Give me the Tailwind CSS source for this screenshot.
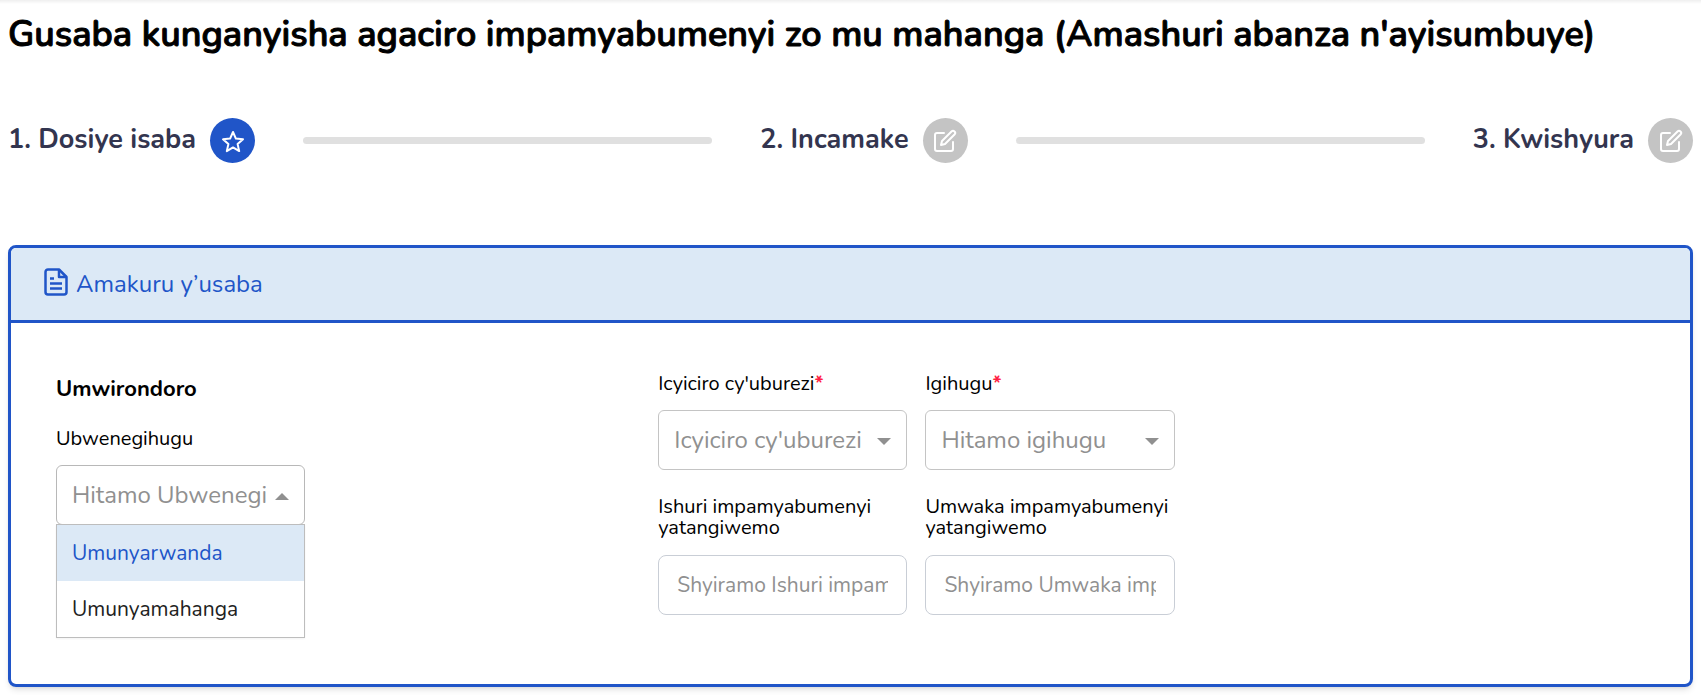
<!DOCTYPE html>
<html lang="rw">
<head>
  <meta charset="UTF-8" />
  <meta name="viewport" content="width=device-width, initial-scale=1.0"/>
  <title>Gusaba kunganyisha agaciro</title>
  <script src="https://cdn.jsdelivr.net/npm/@tailwindcss/browser@4"></script>
</head>
<body class="bg-white text-black font-[Nunito,Lato,sans-serif]">

  <div class="h-1 bg-linear-to-b from-[#efefef] to-white"></div>

  <main class="px-2 pt-2 pb-2">
    <h1 class="text-[36px] leading-[46px] font-semibold [-webkit-text-stroke:1px_black]">Gusaba kunganyisha agaciro impamyabumenyi zo mu mahanga (Amashuri abanza n'ayisumbuye)</h1>

    <!-- Steps -->
    <ol class="mt-[60px] flex items-center gap-12 text-[27px] font-bold text-[#33354f]">
      <li class="flex items-center gap-[14px]">
        <span>1. Dosiye isaba</span>
        <span class="flex size-[45px] items-center justify-center rounded-full bg-[#2055c8] text-white">
          <svg class="size-6" viewBox="0 0 24 24" fill="none" stroke="currentColor" stroke-width="2" stroke-linejoin="round"><path d="M12 3l2.900 6.600 7.100.700-5.400 4.800 1.600 7-6.200-3.700-6.200 3.700 1.600-7L2 10.300l7.100-.700z"/></svg>
        </span>
      </li>
      <li class="h-[7px] flex-1 rounded-full bg-[#e0e0e0]" aria-hidden="true"></li>
      <li class="flex items-center gap-[14px]">
        <span>2. Incamake</span>
        <span class="flex size-[45px] items-center justify-center rounded-full bg-[#c4c4c4] text-white">
          <svg class="size-6" viewBox="0 0 24 24" fill="none" stroke="currentColor" stroke-width="2" stroke-linecap="round" stroke-linejoin="round"><path d="M11 4H4a2 2 0 0 0-2 2v14a2 2 0 0 0 2 2h14a2 2 0 0 0 2-2v-7"/><path d="M18.500 2.500a2.100 2.100 0 0 1 3 3L12 15l-4 1 1-4z"/></svg>
        </span>
      </li>
      <li class="h-[7px] flex-1 rounded-full bg-[#e0e0e0]" aria-hidden="true"></li>
      <li class="flex items-center gap-[14px]">
        <span>3. Kwishyura</span>
        <span class="flex size-[45px] items-center justify-center rounded-full bg-[#c4c4c4] text-white">
          <svg class="size-6" viewBox="0 0 24 24" fill="none" stroke="currentColor" stroke-width="2" stroke-linecap="round" stroke-linejoin="round"><path d="M11 4H4a2 2 0 0 0-2 2v14a2 2 0 0 0 2 2h14a2 2 0 0 0 2-2v-7"/><path d="M18.500 2.500a2.100 2.100 0 0 1 3 3L12 15l-4 1 1-4z"/></svg>
        </span>
      </li>
    </ol>

    <!-- Form card -->
    <section class="mt-[82px] rounded-lg border-3 border-[#2055c8] shadow-md">
      <h2 class="flex h-[75px] items-center gap-2 rounded-t-[5px] border-b-3 border-[#2055c8] bg-[#dce9f6] px-[33px] text-2xl text-[#2055c8]">
        <svg class="mb-1 h-7 w-6" viewBox="0 0 24 28" fill="none" stroke="currentColor" stroke-width="2.500" stroke-linejoin="round"><path d="M15 1.500H4A2.500 2.500 0 0 0 1.500 4v20A2.500 2.500 0 0 0 4 26.500h16a2.500 2.500 0 0 0 2.500-2.500V9z"/><path d="M15 1.500V9h7.500"/><path d="M6 10.500h4M6 15.500h12M6 20.500h12"/></svg>
        Amakuru y’usaba
      </h2>

      <form class="flex px-[45px] pt-[50px] pb-[69px] text-[21px] leading-[21px]">
        <div class="w-[37.9%] pt-[5px]">
          <h3 class="text-[22px] leading-[22px] font-bold">Umwirondoro</h3>
          <label for="nationality" class="mt-7 block text-xl leading-[21px]">Ubwenegihugu</label>
          <div class="relative mt-4 w-[249px]">
            <select id="nationality" class="h-[60px] w-full appearance-none rounded-md border border-[#b8b8b8] pr-[38px] pl-[15px] text-2xl text-[#909090]">
              <option>Hitamo Ubwenegihugu</option>
            </select>
            <svg class="pointer-events-none absolute top-[28px] right-4 h-[7px] w-[14px] text-[#909090]" viewBox="0 0 14 7" fill="currentColor"><path d="M0 7l7-7 7 7z"/></svg>
            <ul role="listbox" aria-label="Ubwenegihugu" class="absolute top-full left-0 -mt-px w-full border border-[#bdbdbd] bg-white shadow-xs">
              <li role="option" aria-selected="true" class="flex h-14 items-center bg-[#dce9f6] px-[15px] text-[#2055c8]">Umunyarwanda</li>
              <li role="option" aria-selected="false" class="flex h-14 items-center px-[15px] text-[#212121]">Umunyamahanga</li>
            </ul>
          </div>
        </div>

        <div class="grid w-[32.5%] grid-cols-2 gap-x-[18px] gap-y-[26px]">
          <div>
            <label for="level" class="block text-xl leading-[21px]">Icyiciro cy'uburezi<span class="font-bold text-[#ff1f44]">*</span></label>
            <div class="relative mt-4">
              <select id="level" class="h-[60px] w-full appearance-none rounded-md border border-[#c4c4c4] pr-[38px] pl-[15px] text-2xl text-[#909090]">
                <option>Icyiciro cy'uburezi</option>
              </select>
              <svg class="pointer-events-none absolute top-[28px] right-4 h-[7px] w-[14px] text-[#909090]" viewBox="0 0 14 7" fill="currentColor"><path d="M0 0h14L7 7z"/></svg>
            </div>
          </div>
          <div>
            <label for="country" class="block text-xl leading-[21px]">Igihugu<span class="font-bold text-[#ff1f44]">*</span></label>
            <div class="relative mt-4">
              <select id="country" class="h-[60px] w-full appearance-none rounded-md border border-[#c4c4c4] pr-[38px] pl-[15px] text-2xl text-[#909090]">
                <option>Hitamo igihugu</option>
              </select>
              <svg class="pointer-events-none absolute top-[28px] right-4 h-[7px] w-[14px] text-[#909090]" viewBox="0 0 14 7" fill="currentColor"><path d="M0 0h14L7 7z"/></svg>
            </div>
          </div>
          <div>
            <label for="school" class="block text-xl leading-[21px]">Ishuri impamyabumenyi yatangiwemo</label>
            <input id="school" type="text" placeholder="Shyiramo Ishuri impamyabumenyi yatangiwemo" class="mt-[17px] h-[60px] w-full rounded-lg border border-[#c9ced6] px-[18px] placeholder:text-[#909090]" />
          </div>
          <div>
            <label for="year" class="block text-xl leading-[21px]">Umwaka impamyabumenyi yatangiwemo</label>
            <input id="year" type="text" placeholder="Shyiramo Umwaka impamyabumenyi yatangiwemo" class="mt-[17px] h-[60px] w-full rounded-lg border border-[#c9ced6] px-[18px] placeholder:text-[#909090]" />
          </div>
        </div>
      </form>
    </section>
  </main>

</body>
</html>
